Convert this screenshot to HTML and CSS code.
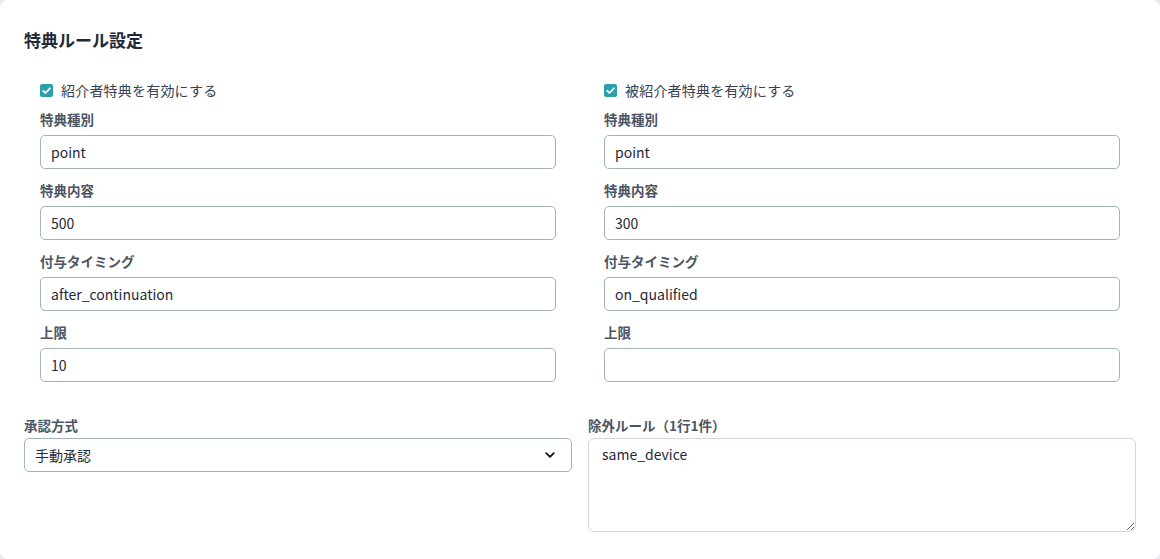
FILE: index.html
```html
<!DOCTYPE html>
<html lang="ja">
<head>
<meta charset="utf-8">
<title>特典ルール設定</title>
<link rel="stylesheet" href="styles.css">
</head>
<body>
<div class="card">
  <h2 class="title">特典ルール設定</h2>
  <div class="grid top">
    <section class="side">
      <label class="check">
        <span class="box"><svg viewBox="0 0 13 13" width="13" height="13"><path d="M3.2 6.8 L5.5 9 L9.9 4.3" fill="none" stroke="#fff" stroke-width="1.8" stroke-linecap="round" stroke-linejoin="round"/></svg></span>
        <span>紹介者特典を有効にする</span>
      </label>
      <div class="field"><div class="lbl">特典種別</div><input class="inp" type="text" value="point"></div>
      <div class="field"><div class="lbl">特典内容</div><input class="inp" type="text" value="500"></div>
      <div class="field"><div class="lbl">付与タイミング</div><input class="inp" type="text" value="after_continuation"></div>
      <div class="field"><div class="lbl">上限</div><input class="inp" type="text" value="10"></div>
    </section>
    <section class="side">
      <label class="check">
        <span class="box"><svg viewBox="0 0 13 13" width="13" height="13"><path d="M3.2 6.8 L5.5 9 L9.9 4.3" fill="none" stroke="#fff" stroke-width="1.8" stroke-linecap="round" stroke-linejoin="round"/></svg></span>
        <span>被紹介者特典を有効にする</span>
      </label>
      <div class="field"><div class="lbl">特典種別</div><input class="inp" type="text" value="point"></div>
      <div class="field"><div class="lbl">特典内容</div><input class="inp" type="text" value="300"></div>
      <div class="field"><div class="lbl">付与タイミング</div><input class="inp" type="text" value="on_qualified"></div>
      <div class="field"><div class="lbl">上限</div><input class="inp" type="text" value=""></div>
    </section>
  </div>
  <div class="grid bottom">
    <div class="field">
      <div class="lbl">承認方式</div>
      <div class="selwrap">
        <select class="inp sel"><option>手動承認</option></select>
        <svg class="chev" viewBox="0 0 10 6" width="10" height="6"><path d="M1.2 1.2 L5 4.8 L8.8 1.2" fill="none" stroke="#111" stroke-width="1.8" stroke-linecap="round" stroke-linejoin="round"/></svg>
      </div>
    </div>
    <div class="field">
      <div class="lbl">除外ルール（1行1件）</div>
      <textarea class="ta">same_device</textarea>
    </div>
  </div>
</div>
</body>
</html>
```
FILE: styles.css
```css
* { box-sizing: border-box; }
html, body { margin: 0; padding: 0; }
body {
  background: #e9ebee;
  font-family: "Noto Sans CJK JP", "Noto Sans", sans-serif;
  color: #1f2937;
}
.card {
  width: 1160px;
  height: 559px;
  background: #fff;
  border-radius: 8px;
  padding: 24px;
  overflow: hidden;
}
.title {
  margin: 0 0 9px;
  font-size: 17px;
  line-height: 32px;
  font-weight: 700;
  color: #1f2937;
}
.grid {
  display: grid;
  grid-template-columns: 1fr 1fr;
  column-gap: 16px;
}
.top { margin-bottom: 19px; }
.side {
  padding: 16px;
  display: flex;
  flex-direction: column;
  gap: 13px;
}
.check {
  display: flex;
  align-items: center;
  gap: 8px;
  font-size: 14px;
  line-height: 20px;
  letter-spacing: 0.2px;
  color: #374151;
  margin: -1px 0 -2px;
}
.box {
  width: 13px;
  height: 13px;
  border-radius: 2px;
  background: #2b9fad;
  display: flex;
}
.field { display: flex; flex-direction: column; }
.lbl {
  font-size: 13.5px;
  line-height: 20px;
  font-weight: 700;
  color: #4b5563;
  margin: -2px 0 6px;
}
.bottom .lbl { margin-bottom: 3px; }
.inp {
  height: 34px;
  width: 100%;
  border: 1px solid #a4b3b5;
  border-radius: 5px;
  padding: 0 10px;
  font-family: "Noto Sans CJK JP", "Noto Sans", sans-serif;
  font-size: 14px;
  color: #1f2937;
  background: #fff;
  outline: none;
}
.selwrap { position: relative; }
.sel {
  appearance: none;
  -webkit-appearance: none;
  display: block;
}
.chev {
  position: absolute;
  right: 17px;
  top: 14px;
}
.ta {
  height: 94px;
  width: 100%;
  border: 1px solid #d4d8de;
  border-radius: 6px;
  padding: 4px 13px;
  font-family: "Noto Sans CJK JP", "Noto Sans", sans-serif;
  font-size: 14px;
  line-height: 22px;
  color: #1f2937;
  resize: vertical;
  outline: none;
}
```
